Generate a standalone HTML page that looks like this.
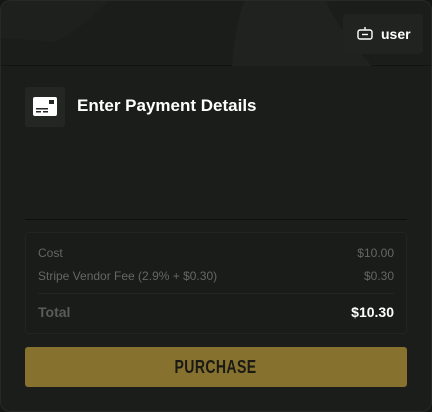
<!DOCTYPE html>
<html><head><style>
*{margin:0;padding:0;box-sizing:border-box}
body{width:432px;height:412px;background:#151715;font-family:"Liberation Sans",sans-serif;overflow:hidden}
.card{position:absolute;left:0;top:0;width:432px;height:412px;background:#1a1d1a;border-radius:10px;overflow:hidden}
.bord{position:absolute;left:0;top:0;width:432px;height:412px;border:1px solid #262926;border-radius:10px;pointer-events:none}
.hdr{position:absolute;left:0;top:0;width:432px;height:66px;background:#1b1d1b;border-bottom:1px solid #121412}
.user{position:absolute;left:343px;top:14px;width:80px;height:40px;background:#212321;border-radius:4px;color:#fff;font-weight:bold;font-size:14px}
.user span{position:absolute;left:38px;top:12px}
.ib{position:absolute;left:25px;top:87px;width:40px;height:40px;background:#242624;border-radius:3px}
.title{position:absolute;left:77px;top:96px;color:#fff;font-weight:bold;font-size:17px}
.sep{position:absolute;left:25px;top:219px;width:382px;height:1px;background:#0f110f}
.sum{position:absolute;left:25px;top:232px;width:382px;height:102px;border:1px solid #212421;border-radius:4px;background:#1a1c1a}
.row{position:absolute;left:12px;right:12px;font-size:12px;color:#646764}
.row b{position:absolute;right:0;top:0;font-weight:normal}
.btn{position:absolute;left:25px;top:347px;width:382px;height:40px;background:#86712f;border-radius:3px;color:#1a1a14;text-align:center;line-height:40px}
.btn span{display:inline-block;font-weight:bold;font-size:18px;transform:scaleX(0.78);letter-spacing:0.5px}
</style></head><body>
<div class="card">
<div class="hdr">
<svg width="432" height="66" style="position:absolute;left:0;top:0">
<path d="M0 38 Q30 40 55 42 Q80 30 110 0 L0 0Z" fill="#1e201e"/>
<path d="M232 66 Q236 20 245 0 L325 0 Q345 40 372 66Z" fill="#202220"/>
</svg>
<div class="user"><svg width="18" height="16" style="position:absolute;left:13px;top:12px" viewBox="0 0 18 16"><rect x="2" y="4" width="14" height="9" rx="2" fill="none" stroke="#fff" stroke-width="1.4"/><line x1="6" y1="8.5" x2="12" y2="8.5" stroke="#fff" stroke-width="1.4"/><line x1="9" y1="1" x2="9" y2="4" stroke="#fff" stroke-width="1.4"/></svg><span>user</span></div>
</div>
<div class="ib"><svg width="24" height="20" style="position:absolute;left:8px;top:10px" viewBox="0 0 24 20"><rect x="0" y="0" width="24" height="19" rx="2" fill="#fff"/><rect x="16" y="3" width="5" height="4" fill="#242624"/><rect x="3" y="11" width="12" height="1.5" fill="#242624"/><rect x="3" y="14" width="5" height="1.5" fill="#242624"/><rect x="10" y="14" width="5" height="1.5" fill="#242624"/></svg></div>
<div class="title">Enter Payment Details</div>
<div class="sep"></div>
<div class="sum">
<div class="row" style="top:13px">Cost<b>$10.00</b></div>
<div class="row" style="top:36px">Stripe Vendor Fee (2.9% + $0.30)<b>$0.30</b></div>
<div style="position:absolute;left:12px;right:12px;top:60px;height:1px;background:#222522"></div>
<div class="row" style="top:71px;font-size:14px;font-weight:bold;color:#595c59">Total<b style="color:#fff;font-weight:bold">$10.30</b></div>
</div>
<div class="btn"><span>PURCHASE</span></div>
</div>
<div class="bord"></div>
</body></html>
